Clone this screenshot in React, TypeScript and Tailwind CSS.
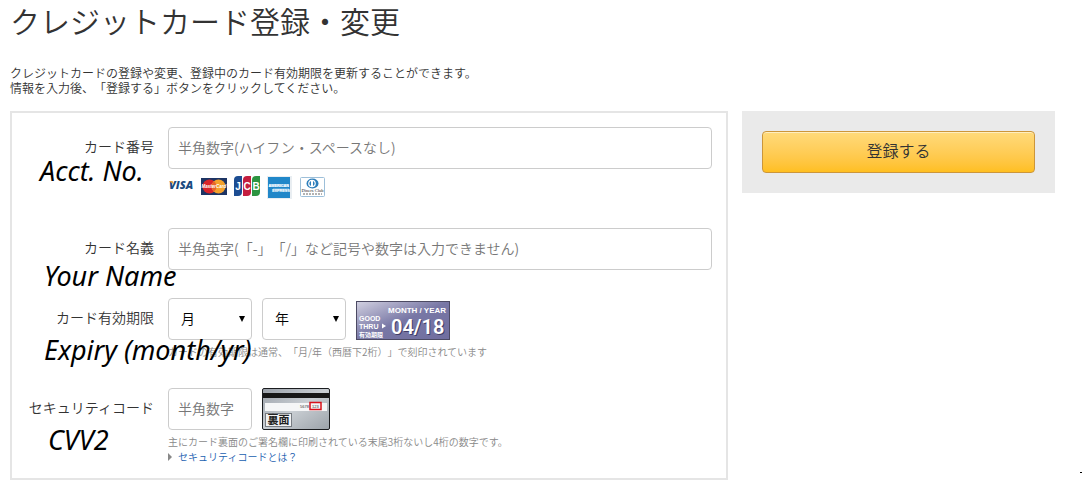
import React, { useState } from 'react';

const VisaLogo = () => (
    <svg viewBox="0 0 27 24" className="w-[27px] h-6" role="img" aria-label="VISA">
        <text x="1" y="13" fontFamily="Open Sans, sans-serif" fontSize="11" fontStyle="italic" fontWeight="800" fill="#1a4a80">VISA</text>
        <path d="M1 5h3.500l1.500 3.500z" fill="#e9a23b" />
    </svg>
);

const MasterCardLogo = () => (
    <svg viewBox="0 0 27 24" className="w-[27px] h-6" role="img" aria-label="MasterCard">
        <rect y="2" width="26" height="17" fill="#1d3464" />
        <circle cx="8.500" cy="10.500" r="7" fill="#d8232a" />
        <circle cx="17.500" cy="10.500" r="7" fill="#f4a12c" />
        <path d="M13 5.100a7 7 0 0 1 0 10.800a7 7 0 0 1 0-10.800" fill="#e8642a" />
        <text x="13" y="12" textAnchor="middle" fontFamily="Liberation Sans, sans-serif" fontSize="4.500" fontStyle="italic" fontWeight="700" fill="#fff">MasterCard</text>
    </svg>
);

const JcbLogo = () => (
    <svg viewBox="0 0 27 24" className="w-[27px] h-6" role="img" aria-label="JCB">
        <path d="M4 0h4v16q0 4-4 4H0V4q0-4 4-4z" fill="#1c4d92" />
        <path d="M13 0h4v16q0 4-4 4H9V4q0-4 4-4z" fill="#c41e3f" />
        <path d="M22 0h4v16q0 4-4 4h-4V4q0-4 4-4z" fill="#2d9441" />
        <g fill="#fff" fontFamily="Liberation Sans, sans-serif" fontSize="10" fontWeight="700" textAnchor="middle">
            <text x="4" y="13.500">J</text>
            <text x="13" y="13.500">C</text>
            <text x="22" y="13.500">B</text>
        </g>
    </svg>
);

const AmexLogo = () => (
    <svg viewBox="0 0 27 24" className="w-[27px] h-6" role="img" aria-label="American Express">
        <rect x="0" y="0" width="25" height="23" fill="#e9eef2" />
        <rect x="1" y="1" width="22" height="21" fill="#2187c9" />
        <path d="M2 8h20v3H2zM6 12.500h16v3H6z" fill="#7dbbe4" />
        <g fill="#fff" fontFamily="Liberation Sans, sans-serif" fontSize="3.800" fontWeight="700">
            <text x="1.500" y="11">AMERICAN</text>
            <text x="5" y="15.500">EXPRESS</text>
        </g>
    </svg>
);

const DinersLogo = () => (
    <svg viewBox="0 0 27 24" className="w-[27px] h-6" role="img" aria-label="Diners Club">
        <rect x="0.500" y="1.500" width="24" height="19" rx="1" fill="#fff" stroke="#9dbfd9" />
        <ellipse cx="12.500" cy="7.500" rx="6" ry="5" fill="#2d7ebb" />
        <circle cx="12" cy="7.500" r="3.800" fill="#fff" />
        <path d="M11 5a2.700 2.700 0 0 0 0 5zM13 5a2.700 2.700 0 0 1 0 5z" fill="#2d7ebb" />
        <text x="12.500" y="16" textAnchor="middle" fontFamily="Liberation Serif, serif" fontSize="4.500" fill="#222">Diners Club</text>
        <path d="M3 18h19" stroke="#666" strokeDasharray="2 1" />
    </svg>
);

const ExpirySample = () => (
    <svg viewBox="0 0 94 39" className="w-[94px] h-[39px]" role="img" aria-label="有効期限の見本">
        <defs>
            <linearGradient id="expiry" x1="0" y1="0" x2="1" y2="1">
                <stop offset="0" stopColor="#d2d1e1" />
                <stop offset="0.5" stopColor="#7877a5" />
                <stop offset="1" stopColor="#706e9f" />
            </linearGradient>
        </defs>
        <rect x="0.500" y="0.500" width="93" height="38" fill="url(#expiry)" stroke="#4c4a63" />
        <g fill="#fff" fontFamily="Liberation Sans, sans-serif" fontWeight="700">
            <text x="32" y="12" fontSize="8">MONTH / YEAR</text>
            <text x="3" y="20" fontSize="7">GOOD</text>
            <text x="3" y="28" fontSize="7">THRU</text>
            <path d="M26 22.500v5l4-2.500z" />
            <text x="3" y="36" fontSize="6" fontFamily="Noto Sans CJK JP, sans-serif">有効期限</text>
        </g>
        <g fontFamily="Roboto, sans-serif" fontSize="20" fontWeight="600">
            <text x="36" y="34" fill="#3f3d66">04/18</text>
            <text x="35" y="33" fill="#fff">04/18</text>
        </g>
    </svg>
);

const CardBackSample = () => (
    <svg viewBox="0 0 68 42" className="w-[68px] h-[42px]" role="img" aria-label="カード裏面の見本">
        <defs>
            <linearGradient id="back" x1="0" y1="0" x2="1" y2="1">
                <stop offset="0" stopColor="#9aa0a8" />
                <stop offset="0.5" stopColor="#c9ced3" />
                <stop offset="1" stopColor="#9ba2a9" />
            </linearGradient>
        </defs>
        <rect x="0.500" y="0.500" width="67" height="41" rx="1.500" fill="url(#back)" stroke="#1b1d20" />
        <path d="M1 5h66v5H1z" fill="#171717" />
        <path d="M3 15h62v8H3z" fill="#f5f6f7" />
        <text x="38" y="20" fontFamily="Liberation Sans, sans-serif" fontSize="4" fill="#333">5678</text>
        <text x="50" y="20" fontFamily="Liberation Sans, sans-serif" fontSize="4" fill="#333">123</text>
        <rect x="48" y="14.500" width="11" height="7" fill="none" stroke="#d8121b" strokeWidth="1.500" />
        <rect x="3.500" y="25.500" width="26" height="13" fill="#f1f2f3" stroke="#777c82" />
        <text x="16.500" y="36" textAnchor="middle" fontFamily="Noto Sans CJK JP, sans-serif" fontSize="11" fontWeight="700" fill="#222">裏面</text>
    </svg>
);

interface FieldRowProps {
    id: string;
    label: string;
    note: string;
    noteClass: string;
    children: React.ReactNode;
}

const FieldRow: React.FC<FieldRowProps> = ({ id, label, note, noteClass, children }) => (
    <div className="grid grid-cols-[126px_1fr] gap-x-3.5">
        <div className="relative">
            <label htmlFor={id} className="block text-right text-sm leading-[38px] whitespace-nowrap">{label}</label>
            {/* English note written over the form */}
            <span className={`absolute z-10 whitespace-nowrap font-['Noto_Sans',sans-serif] font-normal italic text-[27px] leading-7 text-black ${noteClass}`}>
                {note}
            </span>
        </div>
        <div className="min-w-0">{children}</div>
    </div>
);

interface PeriodSelectProps {
    id: string;
    label: string;
    options: string[];
}

const PeriodSelect: React.FC<PeriodSelectProps> = ({ id, label, options }) => (
    <div className="relative">
        <select
            id={id}
            aria-label={label}
            className="appearance-none block w-[84px] h-[42px] pl-3 pr-5 pb-0.5 text-sm text-black bg-white border border-[#ccc] rounded"
        >
            <option value="">{label}</option>
            {options.map(o => <option key={o}>{o}</option>)}
        </select>
        <svg viewBox="0 0 6 6" className="absolute right-[7px] top-[18px] w-1.5 h-1.5 pointer-events-none" aria-hidden="true">
            <path d="M0 0h6L3 6z" />
        </svg>
    </div>
);

const inputClass = 'block h-[42px] px-[9px] pb-0.5 text-sm bg-white border border-[#ccc] rounded placeholder:text-[#777]';

const months = ['01', '02', '03', '04', '05', '06', '07', '08', '09', '10', '11', '12'];
const years = ['17', '18', '19', '20', '21', '22', '23', '24'];

export default function App() {
    const [card, setCard] = useState({ number: '', name: '', code: '' });

    return (
        <div className="relative pl-2.5 pr-[27px] bg-white text-[#333] font-['Noto_Sans_CJK_JP',sans-serif] font-[350] [text-spacing-trim:space-all]">
            <h1 className="text-[30px] leading-10 font-[350]">クレジットカード登録・変更</h1>
            <p className="mt-[25px] text-xs leading-[15px]">
                クレジットカードの登録や変更、登録中のカード有効期限を更新することができます。
                <br />
                情報を入力後、「登録する」ボタンをクリックしてください。
            </p>

            <form onSubmit={e => e.preventDefault()} className="mt-4 flex items-start gap-3.5">
                <div className="flex-1 min-w-0 flex flex-col gap-7 border-2 border-[#e5e5e5] pt-3.5 pb-3.5 pl-4 pr-3.5">
                    <FieldRow id="number" label="カード番号" note="Acct. No." noteClass="left-3 top-[30px]">
                        <input
                            id="number"
                            type="text"
                            placeholder="半角数字(ハイフン・スペースなし)"
                            value={card.number}
                            onChange={e => setCard({ ...card, number: e.target.value })}
                            className={`${inputClass} w-full`}
                        />
                        <div className="mt-[7px] flex gap-1.5">
                            <VisaLogo />
                            <MasterCardLogo />
                            <JcbLogo />
                            <AmexLogo />
                            <DinersLogo />
                        </div>
                    </FieldRow>

                    <FieldRow id="name" label="カード名義" note="Your Name" noteClass="left-4 top-[34px]">
                        <input
                            id="name"
                            type="text"
                            placeholder="半角英字(「-」「/」など記号や数字は入力できません)"
                            value={card.name}
                            onChange={e => setCard({ ...card, name: e.target.value })}
                            className={`${inputClass} w-full`}
                        />
                    </FieldRow>

                    <FieldRow id="month" label="カード有効期限" note="Expiry (month/yr)" noteClass="left-4 top-[38px]">
                        <div className="flex items-end gap-2.5">
                            <PeriodSelect id="month" label="月" options={months} />
                            <PeriodSelect id="year" label="年" options={years} />
                            <ExpirySample />
                        </div>
                        <p className="mt-1 text-[10px] leading-4 text-[#888]">
                            カードの有効期限は通常、「月/年（西暦下2桁）」で刻印されています
                        </p>
                    </FieldRow>

                    <FieldRow id="code" label="セキュリティコード" note="CVV2" noteClass="left-5 top-[38px]">
                        <div className="flex gap-2.5">
                            <input
                                id="code"
                                type="text"
                                placeholder="半角数字"
                                value={card.code}
                                onChange={e => setCard({ ...card, code: e.target.value })}
                                className={`${inputClass} w-[84px]`}
                            />
                            <CardBackSample />
                        </div>
                        <p className="mt-1 text-[10px] leading-[15px] text-[#888]">
                            主にカード裏面のご署名欄に印刷されている末尾3桁ないし4桁の数字です。
                        </p>
                        <a href="#code" className="flex items-center gap-1.5 text-[10px] leading-[15px] text-[#2060b0]">
                            <svg viewBox="0 0 4 8" className="w-1 h-2" aria-hidden="true">
                                <path d="M0 0l4 4-4 4z" fill="#888" />
                            </svg>
                            セキュリティコードとは？
                        </a>
                    </FieldRow>
                </div>

                <aside className="w-[313px] p-5 bg-[#eaeaea]">
                    <button
                        type="submit"
                        className="block w-full h-[42px] pb-1 rounded-sm border border-[#cc963a] bg-linear-to-b from-[#ffda7a] to-[#ffbf1f] text-base text-[#333] shadow-[inset_0_1px_0_#ffeec0]"
                    >
                        登録する
                    </button>
                </aside>
            </form>
            <span className="absolute right-0 bottom-[7px] w-0.5 h-px bg-black" />
        </div>
    );
}
